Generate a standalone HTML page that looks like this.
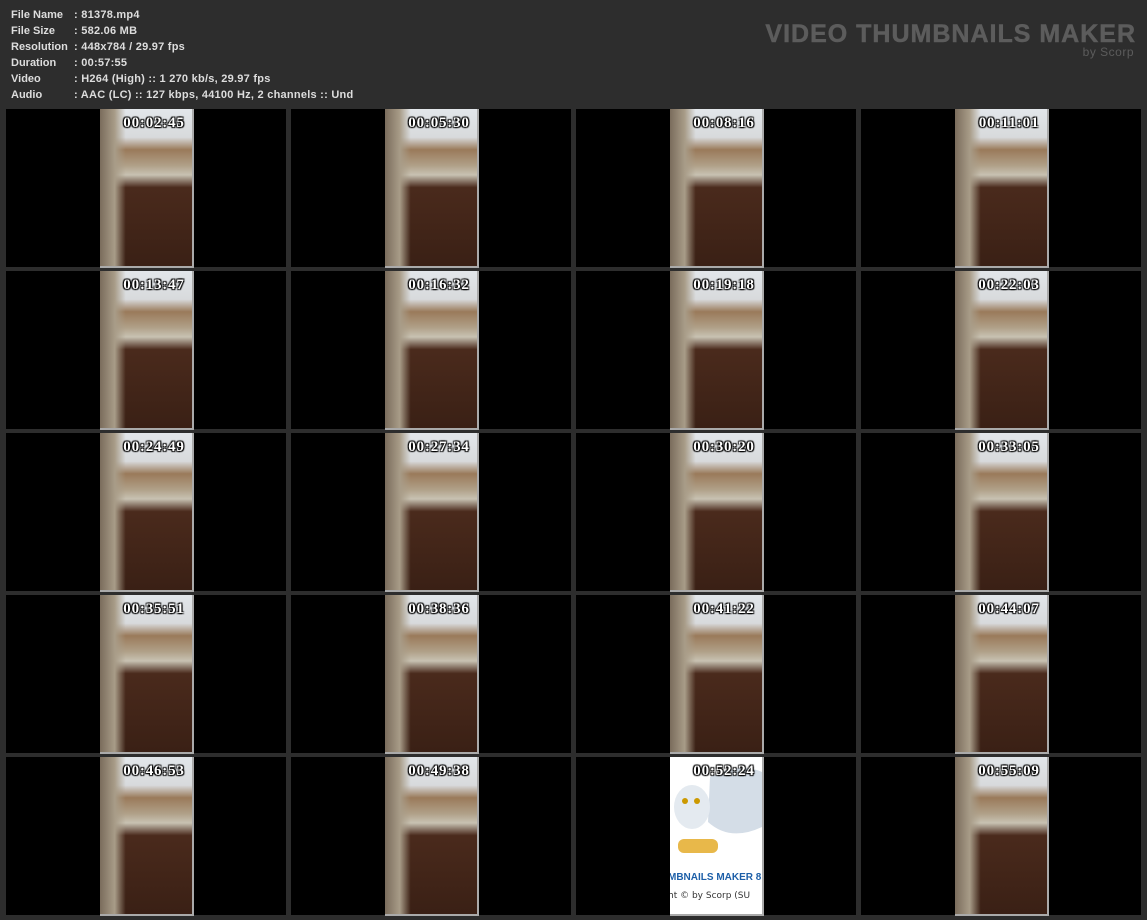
<!DOCTYPE html>
<html><head><meta charset="utf-8"><style>
body{margin:0;width:1147px;height:920px;background:#2d2d2d;position:relative;overflow:hidden;font-family:"Liberation Sans",sans-serif}
.info{position:absolute;left:11px;top:7px;color:#ddd;font-size:11px;font-weight:bold;line-height:16px;letter-spacing:0.25px}
.info div span{display:inline-block;width:63px;letter-spacing:0}
.logo{position:absolute;right:11px;top:20px;text-align:right;color:#5c5c5c}
.logo .t{font-family:"Liberation Sans",sans-serif;font-weight:900;font-size:25px;letter-spacing:1px;-webkit-text-stroke:0.5px #5c5c5c}
.logo .b{font-size:12px;margin-top:-4px;margin-right:2px;letter-spacing:0.5px}
.cell{position:absolute;width:280px;height:158px;background:#000}
.img{position:absolute;left:94px;top:0;width:92px;height:157px;border-right:2px solid #aaa;border-bottom:2px solid #aaa;
background:linear-gradient(90deg,#7a6c5c 0,#a89c88 16%,transparent 28%),linear-gradient(180deg,#e2e6ea 0,#d8dadc 18%,#9a7a5a 26%,#b0a088 36%,#c8c2b2 42%,#4a2a1c 50%,#3a2015 100%)}
.ts{position:absolute;left:8px;width:92px;top:6px;text-align:center;color:#fff;font-family:"Liberation Serif",serif;font-weight:bold;font-size:15px;letter-spacing:0.8px;text-shadow:1px 1px 1px #000,-1px -1px 1px #000,1px -1px 1px #000,-1px 1px 1px #000}
.owl{background:#fff}
</style></head><body>
<div class="info">
<div><span>File Name</span>: 81378.mp4</div>
<div><span>File Size</span>: 582.06 MB</div>
<div><span>Resolution</span>: 448x784 / 29.97 fps</div>
<div><span>Duration</span>: 00:57:55</div>
<div><span>Video</span>: H264 (High) :: 1 270 kb/s, 29.97 fps</div>
<div><span>Audio</span>: AAC (LC) :: 127 kbps, 44100 Hz, 2 channels :: Und</div>
</div>
<div class="logo"><div class="t">VIDEO THUMBNAILS MAKER</div><div class="b">by Scorp</div></div>
<div id="g"></div>
<script>
var ts=["00:02:45","00:05:30","00:08:16","00:11:01","00:13:47","00:16:32","00:19:18","00:22:03","00:24:49","00:27:34","00:30:20","00:33:05","00:35:51","00:38:36","00:41:22","00:44:07","00:46:53","00:49:38","00:52:24","00:55:09"];
var h="";
for(var i=0;i<20;i++){var c=i%4,r=Math.floor(i/4);
var owl=i==18;
h+='<div class="cell" style="left:'+(6+c*285)+'px;top:'+(109+r*162)+'px"><div class="img'+(owl?' owl':'')+'">'+
(owl?'<svg width="92" height="157" style="position:absolute;left:0;top:0"><path d="M40 20 Q70 5 92 15 L92 70 Q60 85 38 65Z" fill="#d4dde7"/><ellipse cx="22" cy="50" rx="18" ry="22" fill="#e4eaf0"/><circle cx="15" cy="44" r="3" fill="#c90"/><circle cx="27" cy="44" r="3" fill="#c90"/><rect x="8" y="82" width="40" height="14" rx="6" fill="#e8b84a"/><text x="-2" y="123" font-family="Liberation Sans" font-weight="bold" font-size="10" fill="#1d5fa8">MBNAILS MAKER 8</text><text x="-2" y="141" font-family="DejaVu Sans" font-size="9" fill="#333">ht © by Scorp (SU</text></svg>':'')+
'<div class="ts">'+ts[i]+'</div></div></div>';}
document.getElementById("g").innerHTML=h;
</script>
</body></html>
